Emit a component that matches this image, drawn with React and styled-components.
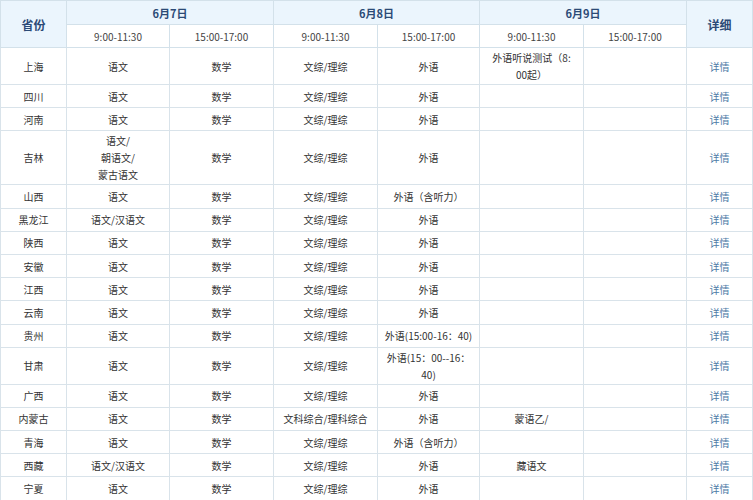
import React from 'react'
import styled, { createGlobalStyle } from 'styled-components'

const GlobalStyle = createGlobalStyle`
    html, body {
        margin: 0;
        padding: 0;
        background: #fff;
    }
    body {
        font-family: "Noto Sans CJK SC", "Noto Sans", sans-serif;
    }
`

const Table = styled.table`
    width: 752px;
    border-collapse: collapse;
    table-layout: fixed;
    font-size: 10px;
    color: #333;
`

const HeadCell = styled.th`
    border: 1px solid #d3e1ea;
    color: ${p => (p.$sub ? '#444' : '#2b4a76')};
    font-weight: ${p => (p.$sub ? 'normal' : 'bold')};
    font-size: ${p => (p.$big ? '12px' : p.$sub ? '10px' : '11px')};
    height: ${p => (p.$sub ? '22px' : '23px')};
    padding: 0;
    text-align: center;
    vertical-align: middle;
    background: ${p => (p.$sub ? '#fff' : '#ebf5fd')};
`

const Row = styled.tr`
    height: 23.2px;
`

const Cell = styled.td`
    border: 1px solid #d9e3ea;
    padding: 1px 4px;
    line-height: 17px;
    text-align: center;
    vertical-align: middle;
`

const Detail = styled.a`
    color: #4d7aa6;
    text-decoration: none;
    cursor: pointer;
`

const rows = [
    ['上海', '语文', '数学', '文综/理综', '外语', ['外语听说测试（8:', '00起）'], ''],
    ['四川', '语文', '数学', '文综/理综', '外语', '', ''],
    ['河南', '语文', '数学', '文综/理综', '外语', '', ''],
    ['吉林', ['语文/', '朝语文/', '蒙古语文'], '数学', '文综/理综', '外语', '', ''],
    ['山西', '语文', '数学', '文综/理综', '外语（含听力）', '', ''],
    ['黑龙江', '语文/汉语文', '数学', '文综/理综', '外语', '', ''],
    ['陕西', '语文', '数学', '文综/理综', '外语', '', ''],
    ['安徽', '语文', '数学', '文综/理综', '外语', '', ''],
    ['江西', '语文', '数学', '文综/理综', '外语', '', ''],
    ['云南', '语文', '数学', '文综/理综', '外语', '', ''],
    ['贵州', '语文', '数学', '文综/理综', '外语(15:00-16：40)', '', ''],
    ['甘肃', '语文', '数学', '文综/理综', ['外语(15：00--16：', '40)'], '', ''],
    ['广西', '语文', '数学', '文综/理综', '外语', '', ''],
    ['内蒙古', '语文', '数学', '文科综合/理科综合', '外语', '蒙语乙/', ''],
    ['青海', '语文', '数学', '文综/理综', '外语（含听力）', '', ''],
    ['西藏', '语文/汉语文', '数学', '文综/理综', '外语', '藏语文', ''],
    ['宁夏', '语文', '数学', '文综/理综', '外语', '', ''],
]

const widths = [66, 103, 104, 104, 102, 104, 103, 66]

const renderText = (v) =>
    Array.isArray(v)
        ? v.map((line, i) => (
              <React.Fragment key={i}>
                  {i > 0 && <br />}
                  {line}
              </React.Fragment>
          ))
        : v

const App = () => {
    return (
        <>
            <GlobalStyle />
            <Table>
                <colgroup>
                    {widths.map((w, i) => (
                        <col key={i} style={{ width: w }} />
                    ))}
                </colgroup>
                <thead>
                    <tr>
                        <HeadCell rowSpan={2} $big>省份</HeadCell>
                        <HeadCell colSpan={2}>6月7日</HeadCell>
                        <HeadCell colSpan={2}>6月8日</HeadCell>
                        <HeadCell colSpan={2}>6月9日</HeadCell>
                        <HeadCell rowSpan={2} $big>详细</HeadCell>
                    </tr>
                    <tr>
                        <HeadCell $sub>9:00-11:30</HeadCell>
                        <HeadCell $sub>15:00-17:00</HeadCell>
                        <HeadCell $sub>9:00-11:30</HeadCell>
                        <HeadCell $sub>15:00-17:00</HeadCell>
                        <HeadCell $sub>9:00-11:30</HeadCell>
                        <HeadCell $sub>15:00-17:00</HeadCell>
                    </tr>
                </thead>
                <tbody>
                    {rows.map((r) => (
                        <Row key={r[0]}>
                            {r.map((v, i) => (
                                <Cell key={i}>{renderText(v)}</Cell>
                            ))}
                            <Cell>
                                <Detail>详情</Detail>
                            </Cell>
                        </Row>
                    ))}
                </tbody>
            </Table>
        </>
    )
}

export default App
